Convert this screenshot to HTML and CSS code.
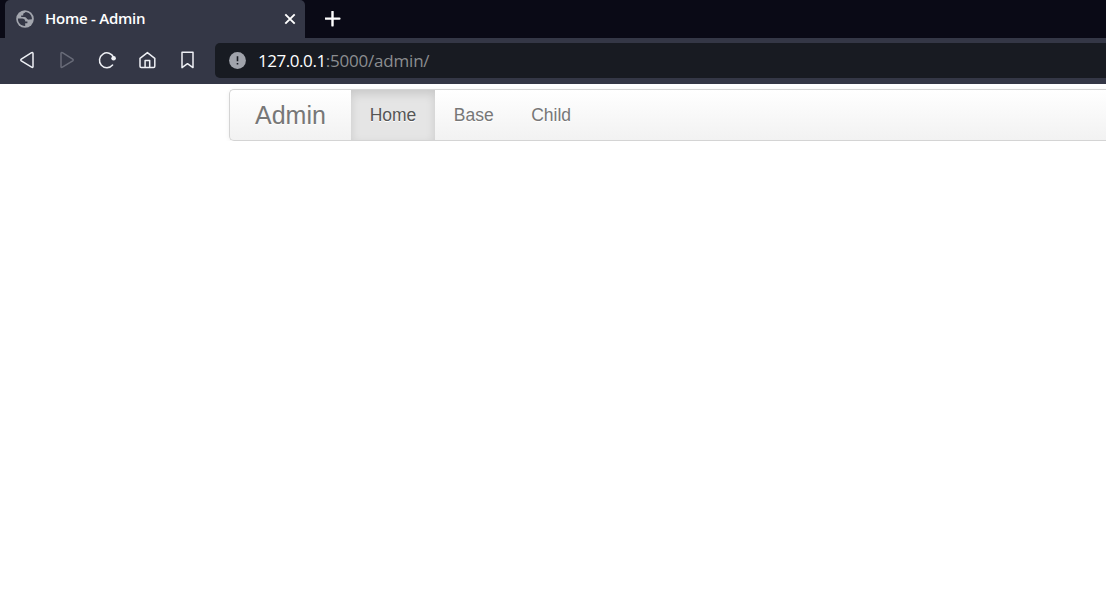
FILE: index.html
```html
<!DOCTYPE html>
<html lang="en">
<head>
<meta charset="utf-8">
<title>Home - Admin</title>
<link rel="stylesheet" href="styles.css">
</head>
<body>
<header class="browser">
  <div class="tabs">
    <div class="tab">
      <svg class="globe" width="18" height="18" viewBox="0 0 18 18"><circle cx="9" cy="9" r="8.8" fill="#a3a6ae"/><path d="M1.9 8.6 H6.2 C8 8.6 9.3 9.8 9.3 11.4 H11.4 V13.2 H9.2 V16 C5 16.2 1.8 12.8 1.9 8.6Z M9.6 2 C8.9 3.2 7.2 2.9 7.2 4.2 V5.6 H5.2 V7 C7.4 7.3 9.4 6.7 10.4 8 C11.3 9.2 12 9.8 13.4 9.6 L16 9.2 C16 5.3 13.2 2.2 9.6 2Z" fill="#343746"/></svg>
      <span class="tab-title">Home - Admin</span>
      <svg class="close" width="12" height="12" viewBox="0 0 12 12"><path d="M1.3 1.3 10.7 10.7M10.7 1.3 1.3 10.7" stroke="#fff" stroke-width="1.9"/></svg>
    </div>
    <svg class="plus" width="16" height="16" viewBox="0 0 16 16"><path d="M7.5 .8V14.4M.8 7.6H14.4" stroke="#fff" stroke-width="2.4" stroke-linecap="round"/></svg>
  </div>
  <div class="toolbar">
    <div class="buttons">
      <svg width="20" height="20" viewBox="0 0 20 20"><path d="M14.6 2.7Q16 2 16 3.6V16.4Q16 18 14.6 17.1L4.3 10.8Q3.3 10 4.3 9.2Z" class="line"/></svg>
      <svg width="20" height="20" viewBox="0 0 20 20"><path d="M5.4 2.7Q4 2 4 3.6V16.4Q4 18 5.4 17.1L15.7 10.8Q16.7 10 15.7 9.2Z" class="line dim"/></svg>
      <svg width="20" height="20" viewBox="0 0 20 20"><path d="M16.7 7.4A7.4 7.4 0 1 0 15.6 15" class="line"/><circle cx="16.6" cy="8.2" r="2.3" fill="#eef0f5"/></svg>
      <svg width="20" height="20" viewBox="0 0 20 20"><path d="M3 8.3 10.4 2.6 17.8 8.3V16.2Q17.8 17.4 16.6 17.4H4.2Q3 17.4 3 16.2ZM8.1 17.4V10.4H12.7V17.4" class="line"/></svg>
      <svg width="20" height="20" viewBox="0 0 20 20"><path d="M5 2.3H16V17.6L10.5 13.7 5 17.6Z" class="line"/></svg>
    </div>
    <div class="address">
      <svg width="17" height="17" viewBox="0 0 17 17"><circle cx="8.5" cy="8.5" r="8.4" fill="#a0a3ab"/><path d="M8.5 4.3V9.2M8.5 10.9V12.5" stroke="#181b22" stroke-width="1.6"/></svg>
      <span class="url"><span class="host">127.0.0.1</span><span class="path">:5000/admin/</span></span>
    </div>
  </div>
</header>
<main class="page">
  <nav class="navbar">
    <a class="brand">Admin</a>
    <a class="link active">Home</a>
    <a class="link">Base</a>
    <a class="link">Child</a>
  </nav>
</main>
</body>
</html>
```
FILE: styles.css
```css
* { box-sizing: border-box; }
body { margin: 0; background: #fff; overflow: hidden; }
svg { display: block; flex: none; }
.browser { height: 84px; background: #343746; font-family: "Open Sans", "Noto Sans", sans-serif; }
.tabs { height: 38px; background: #0a0a16; display: flex; align-items: center; padding-left: 5px; }
.tab { width: 300px; height: 38px; background: #343746; border-radius: 5px 5px 0 0; display: flex; align-items: center; padding: 0 9px 0 11px; }
.tab-title { margin: 0 0 2px 11px; flex: 1; color: #fff; font-size: 15px; font-weight: 600; letter-spacing: -.25px; line-height: 20px; white-space: nowrap; }
.plus { margin-left: 20px; }
.toolbar { height: 46px; display: flex; align-items: center; padding: 0 0 1px 17px; }
.buttons { display: flex; gap: 20px; width: 198px; padding-bottom: 1px; }
.line { fill: none; stroke: #eef0f5; stroke-width: 1.5; stroke-linejoin: round; stroke-linecap: round; }
.line.dim { stroke: #686b78; }
.address { flex: 1; height: 35px; background: #181b22; border-radius: 5px 0 0 5px; display: flex; align-items: center; padding-left: 14px; }
.url { margin-left: 12px; font-size: 17px; line-height: 24px; white-space: nowrap; }
.host { color: #fff; letter-spacing: -.45px; }
.path { color: #8b8d90; letter-spacing: -.2px; }
.page { padding: 5px 0 0 229px; }
.navbar { height: 52px; display: flex; border: 1px solid #d4d4d4; border-right: 0; border-radius: 5px 0 0 5px; background: linear-gradient(#fff, #f2f2f2); box-shadow: 0 1px 5px rgba(0,0,0,.065); font-family: "Liberation Sans", Arial, sans-serif; color: #777; text-shadow: 0 1px 0 #fff; }
.brand { padding: 0 25px; font-size: 25px; line-height: 50px; }
.link { padding: 0 18.75px; font-size: 17.5px; line-height: 50px; }
.active { color: #555; background: #e5e5e5; box-shadow: inset 0 4px 10px rgba(0,0,0,.125); }
```
